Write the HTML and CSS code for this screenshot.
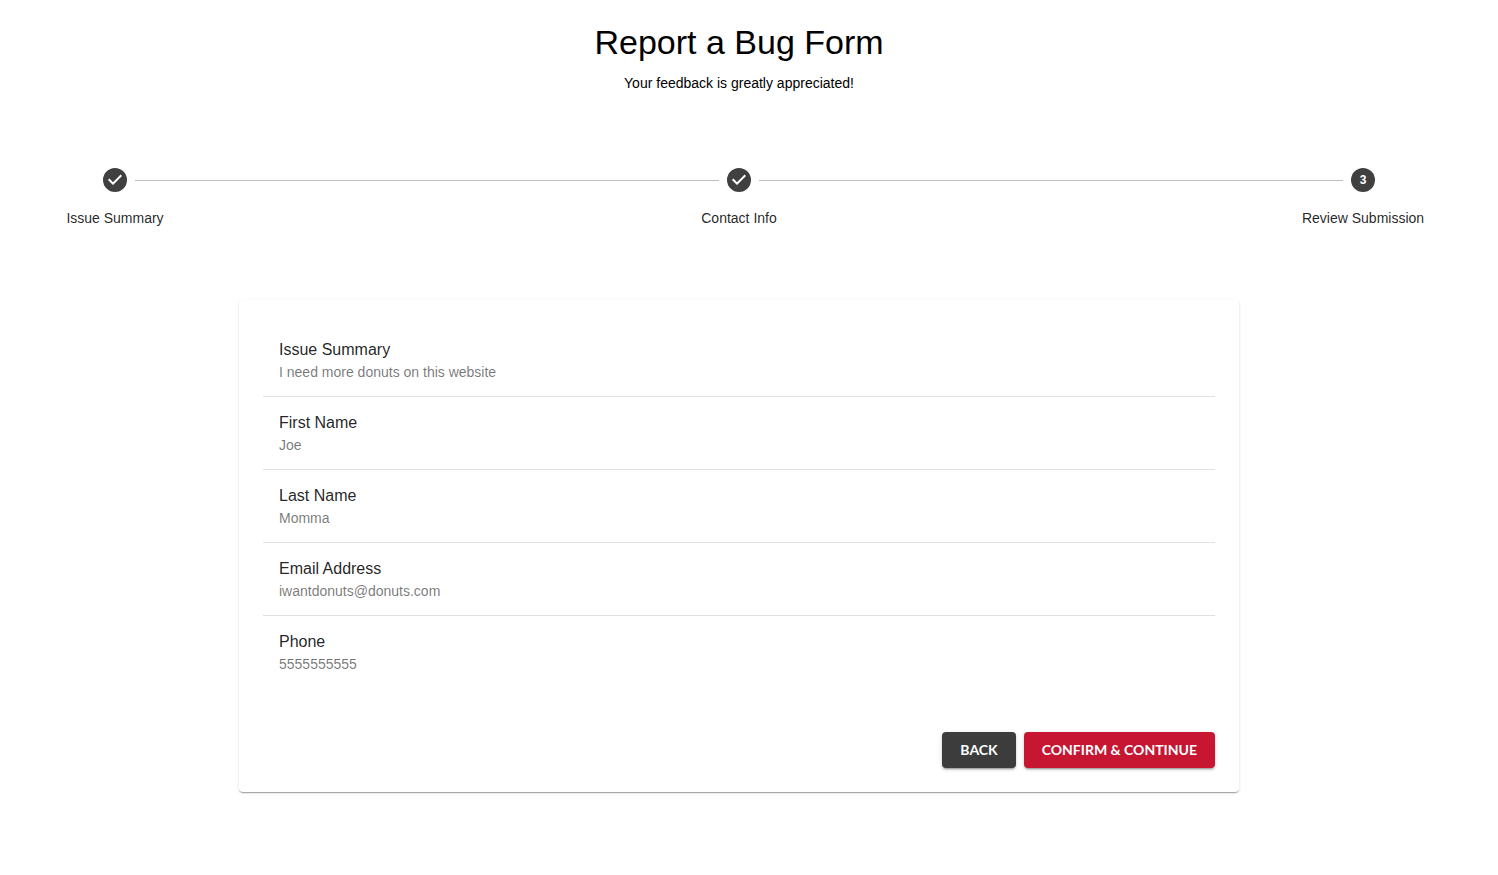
FILE: index.html
```html
<!DOCTYPE html>
<html lang="en">
<head>
<meta charset="utf-8">
<title>Report a Bug Form</title>
<link rel="stylesheet" href="styles.css">
</head>
<body>
<main class="page">
  <header class="intro">
    <h1 class="title">Report a Bug Form</h1>
    <p class="subtitle">Your feedback is greatly appreciated!</p>
  </header>
  <ol class="stepper">
    <li class="step">
      <svg class="step-icon" viewBox="0 0 24 24" aria-hidden="true"><path d="M12 0a12 12 0 1 0 0 24 12 12 0 0 0 0-24zm-2 17l-5-5 1.4-1.4 3.6 3.6 7.6-7.6L19 8l-9 9z"/></svg>
      <span class="step-label">Issue Summary</span>
    </li>
    <li class="connector" role="presentation"></li>
    <li class="step">
      <svg class="step-icon" viewBox="0 0 24 24" aria-hidden="true"><path d="M12 0a12 12 0 1 0 0 24 12 12 0 0 0 0-24zm-2 17l-5-5 1.4-1.4 3.6 3.6 7.6-7.6L19 8l-9 9z"/></svg>
      <span class="step-label">Contact Info</span>
    </li>
    <li class="connector" role="presentation"></li>
    <li class="step" aria-current="step">
      <span class="step-number">3</span>
      <span class="step-label">Review Submission</span>
    </li>
  </ol>
  <section class="card">
    <dl class="summary">
      <div class="entry"><dt class="entry-name">Issue Summary</dt><dd class="entry-value">I need more donuts on this website</dd></div>
      <div class="entry"><dt class="entry-name">First Name</dt><dd class="entry-value">Joe</dd></div>
      <div class="entry"><dt class="entry-name">Last Name</dt><dd class="entry-value">Momma</dd></div>
      <div class="entry"><dt class="entry-name">Email Address</dt><dd class="entry-value">iwantdonuts@donuts.com</dd></div>
      <div class="entry"><dt class="entry-name">Phone</dt><dd class="entry-value">5555555555</dd></div>
    </dl>
    <div class="actions">
      <button class="button" type="button">Back</button>
      <button class="button button-primary" type="submit">Confirm &amp; Continue</button>
    </div>
  </section>
</main>
</body>
</html>
```
FILE: styles.css
```css
* { box-sizing: border-box; }
body {
  margin: 0;
  background: #fff;
  color: #000;
  font-family: "Liberation Sans", Arial, sans-serif;
}
.page { padding: 22px 20px 80px 0; }
.intro { text-align: center; }
.title { margin: 0; font-size: 34px; line-height: 40px; font-weight: 400; }
.subtitle { margin: 11px 0 0; font-size: 14px; line-height: 20px; }
.stepper {
  display: flex;
  margin: 75px 0 0;
  padding: 0 95px;
  list-style: none;
}
/* Labels are wider than the step and stay centred under its icon. */
.step {
  display: flex;
  flex-direction: column;
  align-items: center;
  width: 40px;
}
.connector { flex: 1; height: 1px; margin-top: 12px; background: #bdbdbd; }
.step-icon { display: block; width: 24px; height: 24px; fill: #404040; }
.step-number {
  width: 24px;
  height: 24px;
  border-radius: 50%;
  background: #404040;
  color: #fff;
  font-size: 12px;
  font-weight: 700;
  line-height: 24px;
  text-align: center;
}
.step-label {
  margin-top: 16px;
  font-size: 14px;
  line-height: 20px;
  color: rgba(0, 0, 0, 0.87);
  white-space: nowrap;
}
.card {
  max-width: 1000px;
  margin: 72px auto 0;
  padding: 24px;
  border-radius: 4px;
  box-shadow: 0 2px 1px -1px rgba(0, 0, 0, 0.2), 0 1px 1px rgba(0, 0, 0, 0.14), 0 1px 3px rgba(0, 0, 0, 0.12);
}
.summary { margin: 0; }
.entry { padding: 14px 16px; border-bottom: 1px solid #e0e0e0; }
.entry:last-child { border-bottom: 0; }
.entry-name { font-size: 16px; line-height: 24px; color: rgba(0, 0, 0, 0.87); }
.entry-value { margin: 0; font-size: 14px; line-height: 20px; color: rgba(0, 0, 0, 0.54); }
.actions { display: flex; justify-content: flex-end; gap: 8px; margin-top: 44px; }
.button {
  padding: 6px 18px;
  border: 0;
  border-radius: 4px;
  background: #3c3c3c;
  box-shadow: 0 3px 1px -2px rgba(0, 0, 0, 0.2), 0 2px 2px rgba(0, 0, 0, 0.14), 0 1px 5px rgba(0, 0, 0, 0.12);
  color: #fff;
  font: 700 14px/24px Lato, sans-serif;
  text-transform: uppercase;
  cursor: pointer;
}
.button-primary { background: #c61632; }
```
